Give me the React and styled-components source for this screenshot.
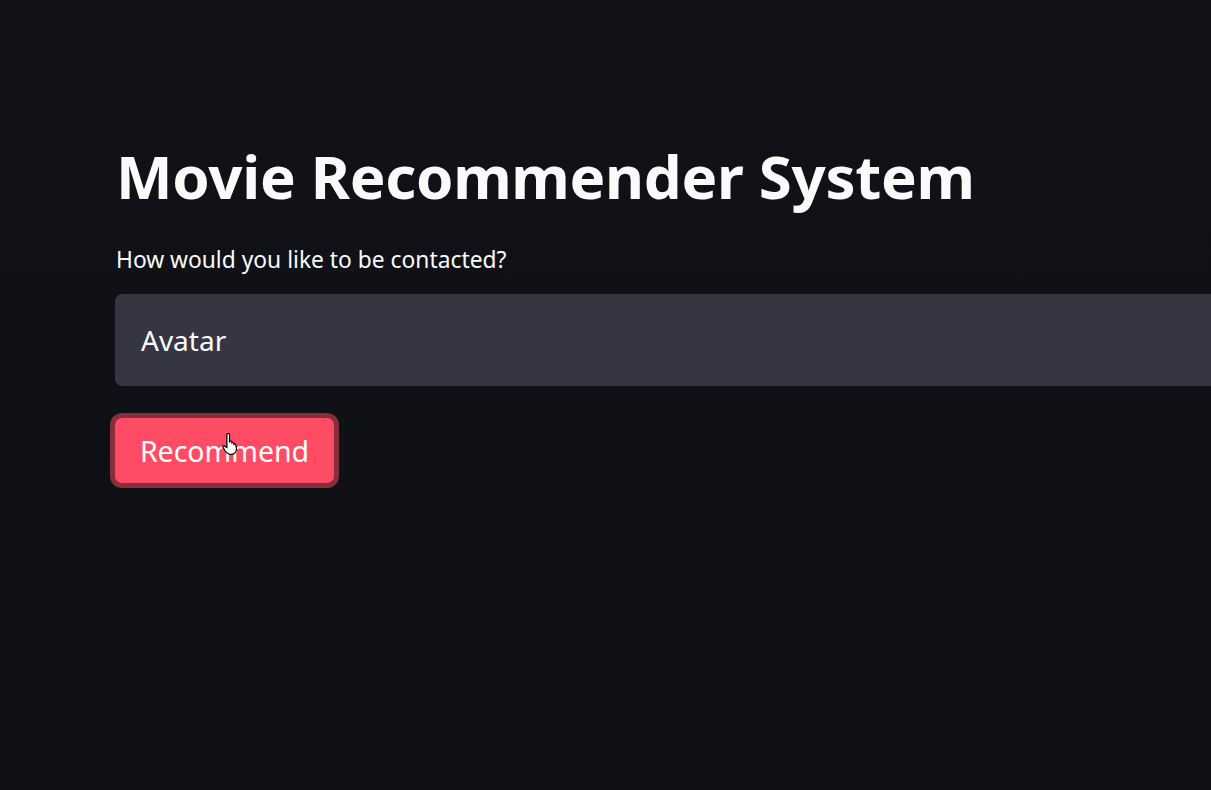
import React from "react";
import styled, { createGlobalStyle } from "styled-components";

const GlobalStyle = createGlobalStyle`
  html, body {
    margin: 0;
    padding: 0;
    background: #0e1117;
    overflow: hidden;
  }
`;

const Page = styled.div`
  width: 1211px;
  height: 790px;
  background: linear-gradient(180deg, #111218 0%, #0e1016 100%);
  box-sizing: border-box;
  padding: 132px 0 0 115px;
  font-family: "Noto Sans", "Open Sans", sans-serif;
  color: #fafafa;
  overflow: hidden;
`;

const Column = styled.div`
  width: 1200px;
  display: flex;
  flex-direction: column;
  align-items: flex-start;
`;

const Title = styled.h1`
  font-family: "Noto Sans", sans-serif;
  font-size: 60px;
  font-weight: 700;
  line-height: 88px;
  margin: 0 0 0 1px;
  letter-spacing: -0.3px;
  color: #fafafa;
`;

const Label = styled.label`
  font-size: 22.8px;
  line-height: 30px;
  margin: 25px 0 0 1px;
  color: #fafafa;
`;

const SelectBox = styled.div`
  margin-top: 19px;
  width: 100%;
  height: 92px;
  box-sizing: border-box;
  background: #363643;
  border-radius: 7px;
  display: flex;
  align-items: center;
  padding-left: 26px;
  font-size: 28px;
  color: #fafafa;
`;

const ButtonWrap = styled.div`
  position: relative;
  margin-top: 32px;
`;

const Button = styled.button`
  font-family: "Noto Sans", sans-serif;
  font-size: 28.5px;
  color: #fff;
  background: #ff4b63;
  border: none;
  border-radius: 7px;
  height: 65px;
  width: 219px;
  padding: 0;
  box-shadow: 0 0 0 5px rgba(255, 75, 99, 0.5);
  cursor: pointer;
`;

const Cursor = styled.svg`
  position: absolute;
  left: 107px;
  top: 15px;
  width: 17px;
  height: 24px;
`;

export default function App() {
  return (
    <>
      <GlobalStyle />
      <Page>
        <Column>
          <Title>Movie Recommender System</Title>
          <Label>How would you like to be contacted?</Label>
          <SelectBox>Avatar</SelectBox>
          <ButtonWrap>
            <Button>Recommend</Button>
            <Cursor viewBox="0 0 14 20">
              <path
                d="M4 1.5c0-.8.5-1.2 1.1-1.2S6.2.7 6.2 1.5V8l.2-1.2c.6-.4 1.5-.2 1.7.5l.1.9c.5-.5 1.4-.3 1.6.4l.1.8c.5-.4 1.4-.2 1.5.5L12 13c0 2.6-1.6 4.8-4.2 4.8S3.6 16.5 2.6 15L.6 11.6c-.4-.7.2-1.4.9-1.1L4 12.2z"
                fill="#fff"
                stroke="#000"
                strokeWidth="1"
              />
            </Cursor>
          </ButtonWrap>
        </Column>
      </Page>
    </>
  );
}
